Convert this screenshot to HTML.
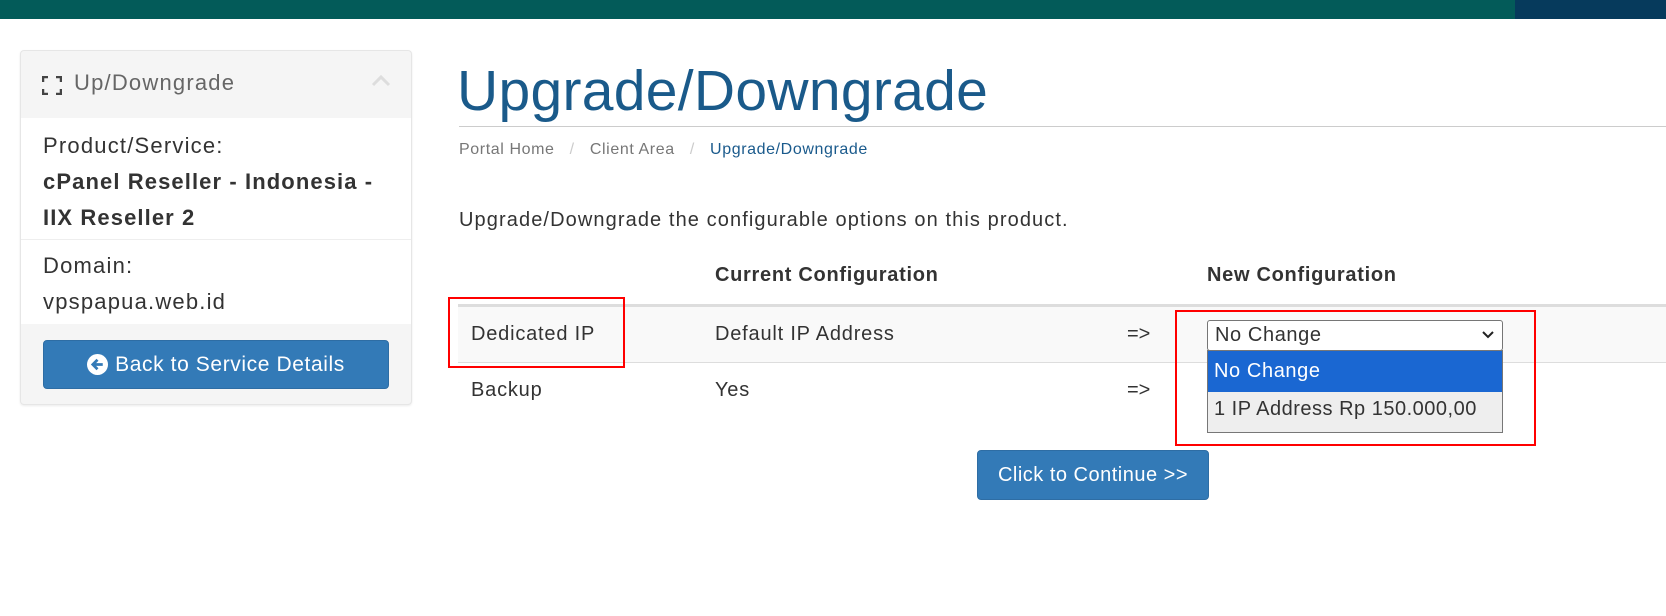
<!DOCTYPE html>
<html><head><meta charset="utf-8"><style>
*{box-sizing:border-box;margin:0;padding:0}
body{width:1666px;height:616px;background:#fff;font-family:"Liberation Sans",sans-serif;color:#333;position:relative;overflow:hidden}
.a{position:absolute;white-space:nowrap}
</style></head><body>
<div class="a" style="left:0;top:0;width:1666px;height:19px;background:#035b59"></div>
<div class="a" style="left:1515px;top:0;width:151px;height:19px;background:#063a5c"></div>

<div class="a" style="left:20px;top:50px;width:392px;height:355px;border:1px solid #e6e6e6;border-radius:4px;background:#f5f5f5;box-shadow:0 1px 2px rgba(0,0,0,.08)"></div>
<div class="a" style="left:21px;top:118px;width:390px;height:206px;background:#fff"></div>
<div class="a" style="left:21px;top:239px;width:390px;height:1px;background:#eee"></div>
<svg class="a" style="left:42px;top:76px" width="20" height="19" viewBox="0 0 20 19"><path d="M1 6V1h5M14 1h5v5M19 13v5h-5M6 18H1v-5" fill="none" stroke="#444" stroke-width="2.5"/></svg>
<div class="a" style="left:74px;top:70px;font-size:22px;color:#666;letter-spacing:1.2px">Up/Downgrade</div>
<svg class="a" style="left:371px;top:75px" width="20" height="12" viewBox="0 0 20 12"><path d="M2 10l8-8 8 8" fill="none" stroke="#ddd" stroke-width="3"/></svg>
<div class="a" style="left:43px;top:128px;font-size:22px;line-height:36px;letter-spacing:1.2px">Product/Service:<br><b style="letter-spacing:1.1px">cPanel Reseller - Indonesia -<br>IIX Reseller 2</b></div>
<div class="a" style="left:43px;top:248px;font-size:22px;line-height:36px;letter-spacing:1.2px">Domain:<br>vpspapua.web.id</div>
<div class="a" style="left:43px;top:340px;width:346px;height:49px;background:#337ab7;border:1px solid #2e6da4;border-radius:4px;color:#fff;font-size:21px;display:flex;align-items:center;justify-content:center;letter-spacing:0.6px"><svg width="21" height="21" viewBox="0 0 20 20" style="margin-right:7px"><circle cx="10" cy="10" r="10" fill="#fff"/><path d="M15 10H6M10 5.5L5.5 10l4.5 4.5" fill="none" stroke="#337ab7" stroke-width="2.6"/></svg>Back to Service Details</div>

<div class="a" style="left:457px;top:58px;font-size:57px;color:#1a5a8a;font-weight:300;letter-spacing:0.3px">Upgrade/Downgrade</div>
<div class="a" style="left:459px;top:126px;width:1207px;height:1px;background:#ccc"></div>
<div class="a" style="left:459px;top:141px;font-size:16px;color:#777;letter-spacing:0.6px">Portal Home &nbsp;&nbsp;<span style="color:#ccc">/</span>&nbsp;&nbsp; Client Area &nbsp;&nbsp;<span style="color:#ccc">/</span>&nbsp;&nbsp; <span style="color:#1a5a8c">Upgrade/Downgrade</span></div>
<div class="a" style="left:459px;top:209px;font-size:20px;letter-spacing:1.1px">Upgrade/Downgrade the configurable options on this product.</div>

<div class="a" style="left:715px;top:264px;font-size:20px;font-weight:bold;letter-spacing:0.7px">Current Configuration</div>
<div class="a" style="left:1207px;top:264px;font-size:20px;font-weight:bold;letter-spacing:0.7px">New Configuration</div>
<div class="a" style="left:458px;top:304px;width:1208px;height:3px;background:#ddd"></div>
<div class="a" style="left:458px;top:307px;width:1208px;height:56px;background:#f9f9f9;border-bottom:1px solid #ddd"></div>
<div class="a" style="left:471px;top:323px;font-size:20px;letter-spacing:0.8px">Dedicated IP</div>
<div class="a" style="left:715px;top:323px;font-size:20px;letter-spacing:0.8px">Default IP Address</div>
<div class="a" style="left:1127px;top:323px;font-size:20px">=&gt;</div>
<div class="a" style="left:471px;top:379px;font-size:20px;letter-spacing:0.8px">Backup</div>
<div class="a" style="left:715px;top:379px;font-size:20px;letter-spacing:0.8px">Yes</div>
<div class="a" style="left:1127px;top:379px;font-size:20px">=&gt;</div>

<div class="a" style="left:1207px;top:320px;width:296px;height:31px;background:#fff;border:1px solid #767676;border-radius:3px;font-size:20px;line-height:29px;padding-left:7px;letter-spacing:0.6px">No Change</div>
<svg class="a" style="left:1482px;top:331px" width="12" height="8" viewBox="0 0 12 8"><path d="M1 1l5 5 5-5" fill="none" stroke="#222" stroke-width="2"/></svg>
<div class="a" style="left:1207px;top:350px;width:296px;height:83px;border:1px solid #777;background:#eee"></div>
<div class="a" style="left:1208px;top:351px;width:294px;height:41px;background:#1a67d2;color:#fff;font-size:20px;line-height:40px;padding-left:6px;letter-spacing:0.6px">No Change</div>
<div class="a" style="left:1214px;top:398px;font-size:20px;letter-spacing:0.5px">1 IP Address Rp 150.000,00</div>

<div class="a" style="left:448px;top:297px;width:177px;height:71px;border:2px solid #f00"></div>
<div class="a" style="left:1175px;top:310px;width:361px;height:136px;border:2px solid #f00"></div>

<div class="a" style="left:977px;top:450px;width:232px;height:50px;background:#337ab7;border:1px solid #2e6da4;border-radius:4px;color:#fff;font-size:20px;line-height:48px;text-align:center;letter-spacing:0.5px">Click to Continue &gt;&gt;</div>
</body></html>
